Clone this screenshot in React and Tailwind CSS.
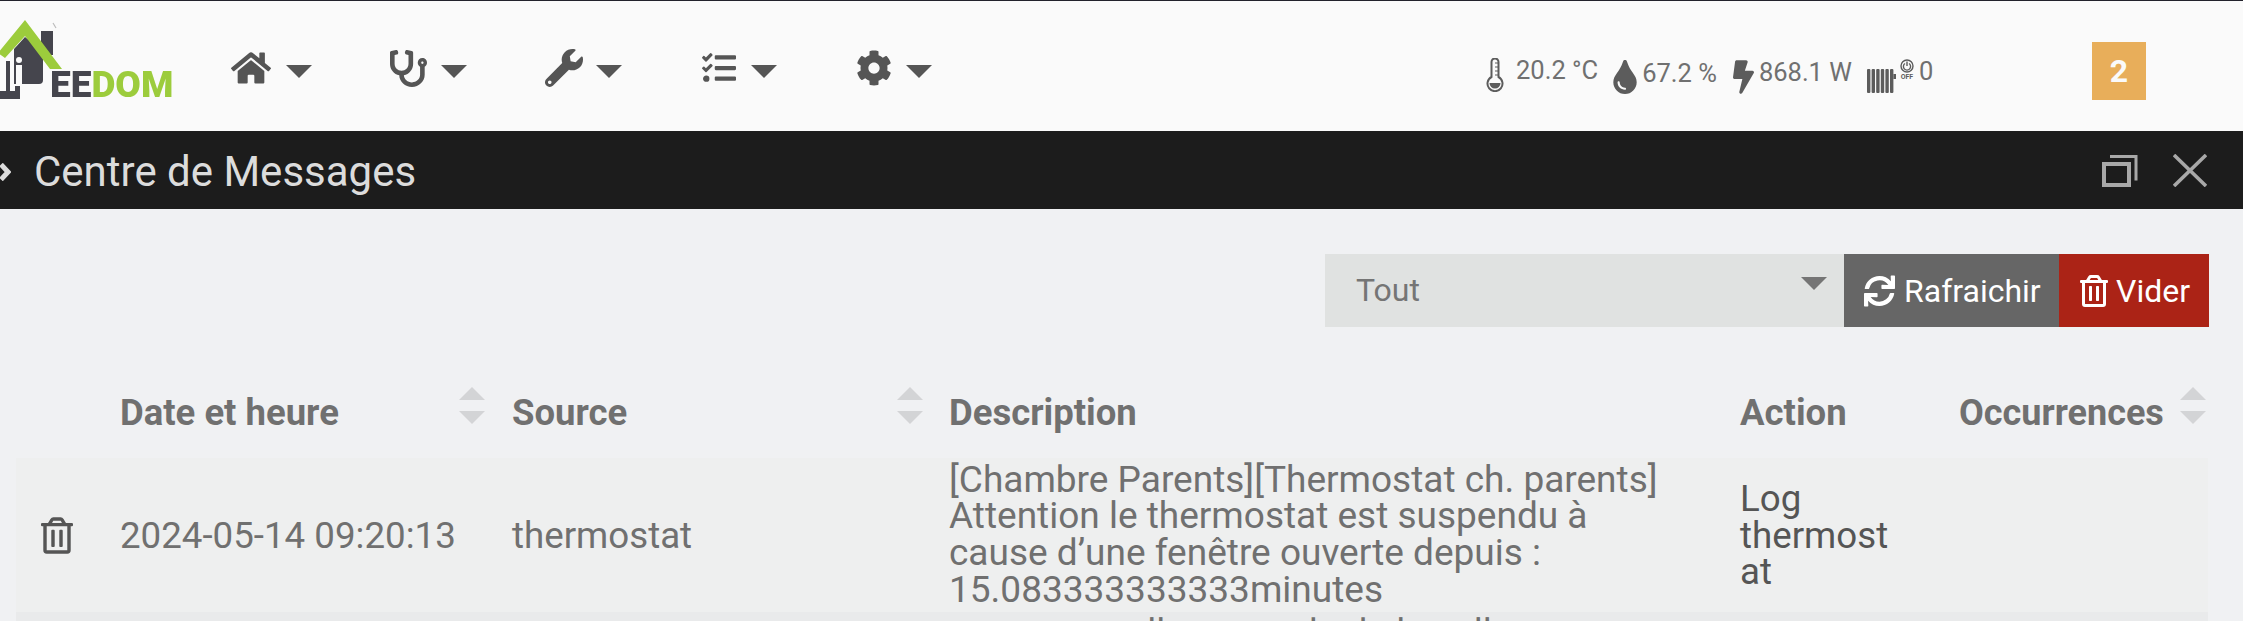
import { FaHome, FaStethoscope, FaWrench, FaTasks, FaCog, FaSync, FaRegTrashAlt, FaTint, FaBolt } from "react-icons/fa";

const Caret = ({ className }) => (
  <svg viewBox="0 0 26 13" className={className} fill="currentColor">
    <polygon points="0,0 26,0 13,13" />
  </svg>
);

const SortArrows = ({ className }) => (
  <svg viewBox="0 0 26 37" className={`w-[26px] h-[37px] text-[#d3d4d6] ${className}`} fill="currentColor">
    <polygon points="13,0 26,13 0,13" />
    <polygon points="0,24 26,24 13,37" />
  </svg>
);

const Logo = () => (
  <div className="flex items-start w-[173px] blur-[0.6px]">
    <svg viewBox="0 0 50 100" className="w-[50px] h-[100px] overflow-visible shrink-0">
      <rect x="41" y="30" width="12" height="24" fill="#45454d" />
      <path d="M53 22l3 5" stroke="#bbb" strokeWidth="1.2" fill="none" />
      <path d="M14 48L25 36L43 50V79Q43 83 39 83H14Z" fill="#45454d" />
      <polygon points="-2,52 25,19 62,68 50,68 25,35 5,57" fill="#9ccc3c" />
      <circle cx="19" cy="59" r="3" fill="#fafafa" />
      <rect x="16" y="64" width="6" height="22" fill="#fafafa" />
      <path d="M6 60h4v25H6z" fill="#45454d" />
      <path d="M0 90h6V83h4v7h5V85h5v13H0z" fill="#45454d" />
    </svg>
    <span className="mt-[70px] text-[37px] leading-[28px] font-black">
      <span className="text-[#45454d]">EE</span>
      <span className="text-[#9ccc3c]">DOM</span>
    </span>
  </div>
);

const Thermometer = () => (
  <svg viewBox="0 0 18 34" className="w-[18px] h-[34px] text-[#5c5c5c] shrink-0" fill="none" stroke="currentColor" strokeWidth="2">
    <path d="M5.5 19V4a3.5 3.5 0 0 1 7 0v15a7.5 7.5 0 1 1-7 0z" />
    <path d="M3.5 25h11a5.5 5.5 0 0 1-11 0z" fill="currentColor" stroke="none" />
    <path d="M9 5h3M9 9h3M9 13h3M9 17h3" strokeWidth="1" />
  </svg>
);

const Radiator = () => (
  <svg viewBox="0 0 29 24" className="w-[29px] h-[24px] text-[#5c5c5c] shrink-0" fill="currentColor">
    <rect x="0" y="0" width="3.4" height="24" rx="1" />
    <rect x="4.6" y="0" width="3.4" height="24" rx="1" />
    <rect x="9.2" y="0" width="3.4" height="24" rx="1" />
    <rect x="13.8" y="0" width="3.4" height="24" rx="1" />
    <rect x="18.4" y="0" width="3.4" height="24" rx="1" />
    <rect x="23" y="0" width="3.4" height="24" rx="1" />
    <rect x="26.4" y="5" width="2.6" height="5" />
  </svg>
);

const PowerOff = () => (
  <div className="flex flex-col items-center w-[14px] text-[#5c5c5c] mt-[1px] ml-[4px] mr-[5px]">
    <svg viewBox="0 0 14 14" className="w-[14px] h-[14px]" fill="none" stroke="currentColor">
      <circle cx="7" cy="7" r="6" strokeWidth="1.4" />
      <path d="M5 4.5a3.6 3.6 0 1 0 4 0M7 2.5v4.5" strokeWidth="1.4" />
    </svg>
    <span className="text-[7px] leading-[7px] font-bold mt-[1px]">OFF</span>
  </div>
);

const RestoreIcon = () => (
  <svg viewBox="0 0 36 33" className="w-[36px] h-[33px] text-[#a8a8a8]" fill="none" stroke="currentColor" strokeWidth="4">
    <rect x="2" y="10" width="25" height="21" />
    <path d="M8 2.5h26v24" strokeWidth="3" />
  </svg>
);

const CloseIcon = () => (
  <svg viewBox="0 0 34 33" className="w-[34px] h-[33px] text-[#a8a8a8]" fill="none" stroke="currentColor" strokeWidth="3.6">
    <path d="M1 1L33 32M33 1L1 32" />
  </svg>
);

const navItems = [
  { icon: <FaHome className="w-[40px] h-[36px]" />, pad: "pl-0" },
  { icon: <FaStethoscope className="w-[37px] h-[37px]" />, pad: "pl-[4px]" },
  { icon: <FaWrench className="w-[38px] h-[38px]" />, pad: "pl-[4px]" },
  { icon: <FaTasks className="w-[38px] h-[34px]" />, pad: "pl-[4px]" },
  { icon: <FaCog className="w-[36px] h-[36px]" />, pad: "pl-[5px]" },
];

const cols = "grid grid-cols-[89px_391px_438px_791px_219px_264px]";

const App = () => {
  return (
    <div className="w-full h-[621px] overflow-hidden bg-[#f0f1f3] font-[Roboto,sans-serif] text-[#707070]">
      {/* navbar */}
      <div className="flex items-start h-[131px] bg-[#fafafa] border-t border-[#22222c]">
        <Logo />
        <div className="flex ml-[58px] mt-[48px] text-[#555]">
          {navItems.map((item, i) => (
            <div key={i} className="flex items-center w-[155px] h-[38px]">
              <div className={`w-[55px] flex ${item.pad}`}>{item.icon}</div>
              <Caret className="w-[26px] h-[13px] mt-[6px]" />
            </div>
          ))}
        </div>
        <div className="flex items-start ml-[480px] mt-[57px] text-[25.5px] leading-[25px]">
          <Thermometer />
          <span className="ml-[12px] mr-[15px]">20.2 °C</span>
          <FaTint className="w-[24px] h-[34px] text-[#5c5c5c] mt-[2px]" />
          <span className="ml-[5px] mr-[16px] mt-[3px]">67.2 %</span>
          <FaBolt className="w-[21px] h-[34px] text-[#5c5c5c] mt-[2px]" />
          <span className="ml-[5px] mr-[15px] mt-[2px]">868.1 W</span>
          <div className="mt-[11px]">
            <Radiator />
          </div>
          <PowerOff />
          <span className="mt-[1px]">0</span>
        </div>
        <div className="ml-auto mr-[97px] mt-[41px] w-[54px] h-[58px] bg-[#e8ae5a] text-[#fafafa] text-[32px] font-bold flex items-center justify-center">
          2
        </div>
      </div>

      {/* title bar */}
      <div className="flex items-center h-[78px] bg-[#1c1c1c] text-[#dcdcdc]">
        <svg viewBox="0 0 11 18" className="w-[11px] h-[18px] mr-[23px] mt-[4px] shrink-0" fill="none" stroke="#dcdcdc" strokeWidth="5">
          <path d="M1 1.5L8 9L1 16.5" />
        </svg>
        <span className="text-[42px] leading-[44px] mt-[4px]">Centre de Messages</span>
        <div className="flex items-center ml-auto mr-[36px]">
          <RestoreIcon />
          <div className="ml-[35px]">
            <CloseIcon />
          </div>
        </div>
      </div>

      {/* toolbar */}
      <div className="flex justify-end pt-[45px] pr-[34px]">
        <div className="flex items-start justify-between w-[519px] h-[73px] bg-[#e0e2e1] pl-[31px] pr-[17px]">
          <span className="text-[32px] leading-[73px] text-[#757575]">Tout</span>
          <Caret className="w-[26px] h-[13px] mt-[23px] text-[#757575]" />
        </div>
        <div className="flex items-center w-[215px] h-[73px] bg-[#666] text-white pl-[20px]">
          <FaSync className="w-[31px] h-[32px]" />
          <span className="ml-[9px] text-[32px]">Rafraichir</span>
        </div>
        <div className="flex items-center w-[150px] h-[73px] bg-[#ab2316] text-white pl-[21px]">
          <FaRegTrashAlt className="w-[28px] h-[32px]" />
          <span className="ml-[8px] text-[32px]">Vider</span>
        </div>
      </div>

      {/* table */}
      <div className="ml-[16px] w-[2192px] mt-[60px]">
        <div className={`${cols} h-[71px] font-bold text-[36.5px] leading-[52px]`}>
          <div />
          <div className="flex justify-between pl-[15px] pr-[11px]">
            <span>Date et heure</span>
            <SortArrows />
          </div>
          <div className="flex justify-between pl-[16px] pr-[11px]">
            <span>Source</span>
            <SortArrows />
          </div>
          <div className="pl-[15px]">Description</div>
          <div className="pl-[15px]">Action</div>
          <div className="flex justify-between pl-[15px] pr-[2px]">
            <span className="text-[36px]">Occurrences</span>
            <SortArrows />
          </div>
        </div>
        <div className={`${cols} items-center h-[154px] bg-[#eeefef] text-[36.7px] leading-[36.7px]`}>
          <div className="flex pl-[25px]">
            <FaRegTrashAlt className="w-[32px] h-[37px] text-[#555]" />
          </div>
          <div className="pl-[15px] mt-[2px]">2024-05-14 09:20:13</div>
          <div className="pl-[16px] mt-[2px]">thermostat</div>
          <div className="pl-[15px] pr-[55px] text-[37px]">
            [Chambre Parents][Thermostat ch. parents] Attention le thermostat est suspendu à cause d’une fenêtre ouverte depuis : 15.083333333333minutes
          </div>
          <div className="pl-[15px] pr-[50px] break-words text-[#555] mt-[2px]">Log thermostat</div>
          <div />
        </div>
        <div className={`${cols} h-[154px] bg-[#e9eaeb] text-[37px] leading-[36.7px]`}>
          <div />
          <div />
          <div />
          <div className="pl-[15px] pt-[3px]">message : alle en mode de la salle</div>
          <div />
          <div />
        </div>
      </div>
    </div>
  );
};

export default App;
